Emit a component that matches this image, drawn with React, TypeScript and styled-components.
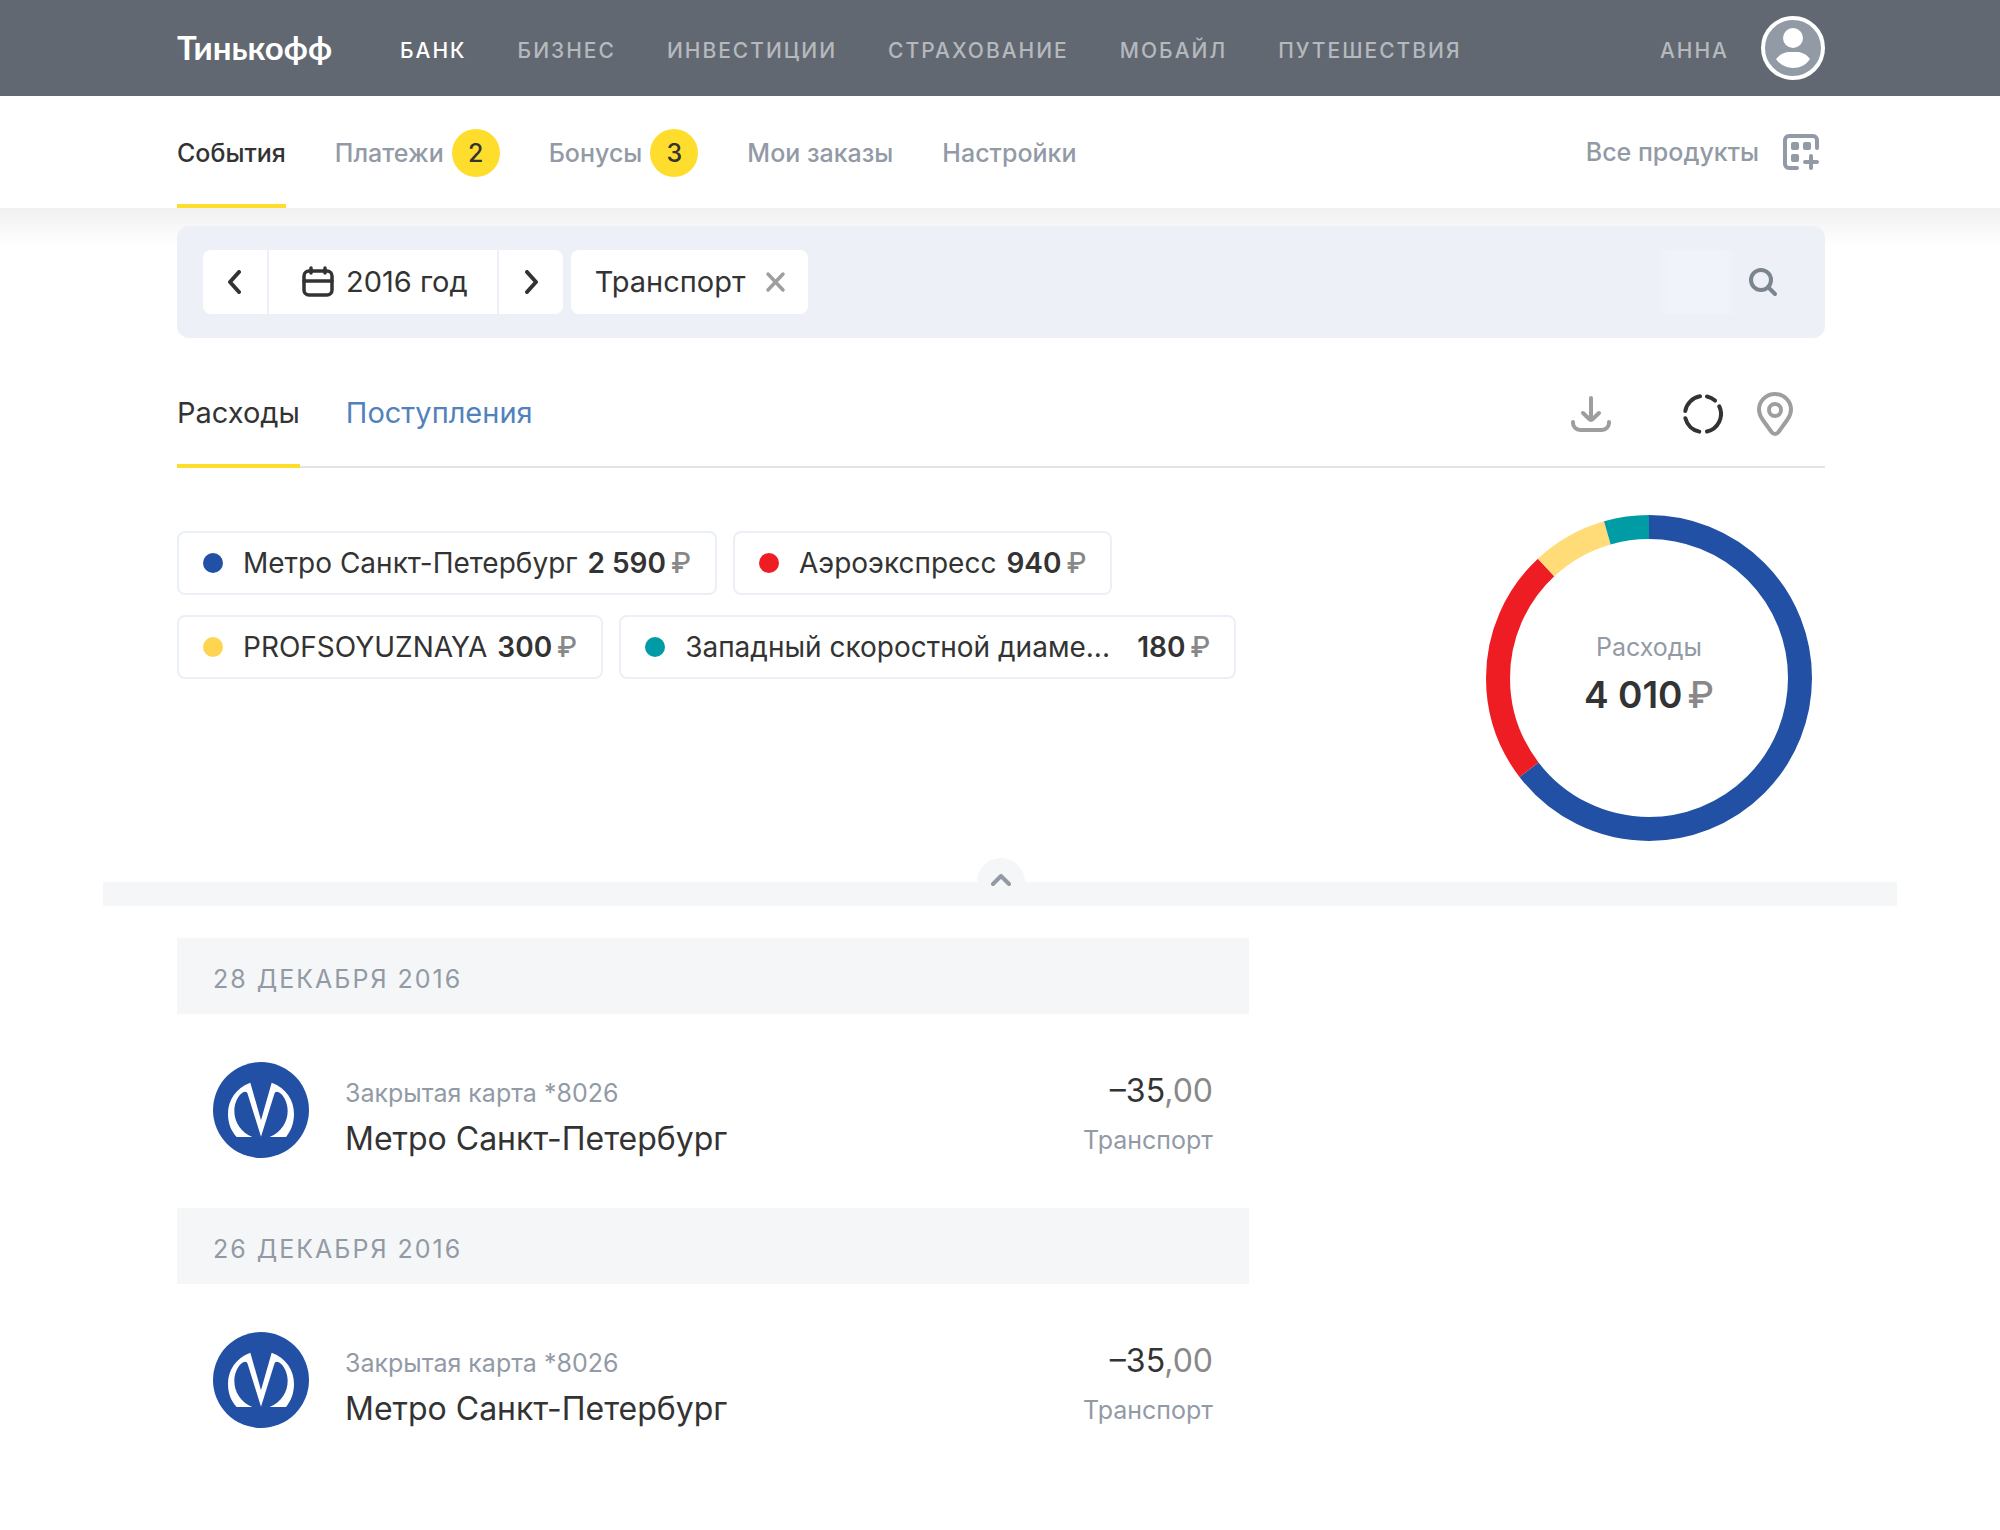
import React from "react";
import styled, { createGlobalStyle } from "styled-components";

const colors = {
  header: "#626871",
  headerMuted: "#b5b9be",
  text: "#333333",
  muted: "#929aa6",
  grey: "#888888",
  icon: "#9e9e9e",
  accent: "#ffdd2d",
  link: "#5182bc",
  panel: "#edf0f6",
  soft: "#f5f6f8",
};

const GlobalStyle = createGlobalStyle`
  *, *::before, *::after { box-sizing: border-box; }
  body {
    margin: 0;
    background: #fff;
    color: ${colors.text};
    font-family: Inter, "Liberation Sans", Arial, sans-serif;
    -webkit-font-smoothing: antialiased;
  }
  button, input { font: inherit; color: inherit; }
  button { border: 0; padding: 0; background: none; cursor: pointer; }
  a { color: inherit; text-decoration: none; }
  svg { display: block; flex: none; }
`;

const Container = styled.div`
  padding: 0 175px 0 177px;
`;

/* Top bar */

const TopBar = styled.header`
  background: ${colors.header};
`;

const TopBarInner = styled(Container)`
  display: flex;
  align-items: center;
  height: 96px;
`;

const Logo = styled.a`
  padding-bottom: 2px;
  color: #fff;
  font-family: Lato, "Liberation Sans", sans-serif;
  font-size: 33px;
  line-height: 40px;
  font-weight: 700;
`;

const TopNav = styled.nav`
  display: flex;
  gap: 51px;
  margin-left: 68px;
  padding-top: 6px;
`;

const TopLink = styled.a<{ $active?: boolean }>`
  color: ${(p) => (p.$active ? "#fff" : colors.headerMuted)};
  font-size: 21px;
  line-height: 28px;
  font-weight: 500;
  letter-spacing: 2px;
  text-transform: uppercase;
`;

const Profile = styled.a`
  display: flex;
  align-items: center;
  gap: 32px;
  margin-left: auto;
`;

const ProfileName = styled(TopLink).attrs({ as: "span" })`
  padding-top: 6px;
`;

/* Section navigation */

const SubBar = styled.div`
  background: #fff;
`;

const SubBarInner = styled(Container)`
  display: flex;
  align-items: stretch;
  height: 112px;
`;

const SubNav = styled.nav`
  display: flex;
  gap: 49px;
`;

const SubLink = styled.a<{ $active?: boolean }>`
  display: flex;
  align-items: center;
  gap: 8px;
  padding-top: 5px;
  border-bottom: 4px solid ${(p) => (p.$active ? colors.accent : "transparent")};
  color: ${(p) => (p.$active ? colors.text : colors.muted)};
  font-size: 25px;
  line-height: 32px;
  font-weight: 500;
`;

const Badge = styled.span`
  display: grid;
  place-items: center;
  width: 48px;
  height: 48px;
  border-radius: 50%;
  background: ${colors.accent};
  color: ${colors.text};
`;

const ProductsLink = styled.a`
  display: flex;
  align-items: center;
  gap: 24px;
  margin-left: auto;
  padding-right: 6px;
  color: ${colors.muted};
  font-size: 25px;
  line-height: 32px;
  font-weight: 500;
`;

/* Filter panel */

const Main = styled.main`
  padding-top: 18px;
  background: linear-gradient(#f0f0f0, #fff) top / 100% 38px no-repeat;
`;

const FilterPanel = styled.section`
  display: flex;
  gap: 8px;
  height: 112px;
  padding: 24px 26px;
  border-radius: 12px;
  background: ${colors.panel};
  font-size: 29px;
  line-height: 36px;
`;

const Period = styled.div`
  display: flex;
  gap: 2px;
  border-radius: 8px;
  overflow: hidden;
`;

const PeriodStep = styled.button`
  display: grid;
  place-items: center;
  width: 64px;
  background: #fff;
`;

const PeriodValue = styled.button`
  display: flex;
  align-items: center;
  gap: 12px;
  padding: 0 29px 0 33px;
  background: #fff;
`;

const FilterTag = styled.button`
  display: flex;
  align-items: center;
  gap: 18px;
  padding: 0 20px 0 24px;
  border-radius: 8px;
  background: #fff;
`;

const Search = styled.form`
  display: flex;
  align-items: center;
  flex: 1;
  gap: 6px;
  padding-right: 16px;
`;

const SearchInput = styled.input`
  flex: 1;
  min-width: 0;
  height: 64px;
  border: 0;
  outline: 0;
  background: linear-gradient(90deg, ${colors.panel}, #f0f3f9 15%, #f0f3f9 85%, ${colors.panel})
    right / 80px 100% no-repeat;
`;

const SearchButton = styled.button`
  display: grid;
  place-items: center;
  width: 40px;
  height: 64px;
  color: #7a858e;
`;

/* Tabs */

const TabsRow = styled.div`
  display: flex;
  align-items: stretch;
  justify-content: space-between;
  height: 108px;
  margin-top: 22px;
  box-shadow: inset 0 -2px 0 #e4e4e4;
`;

const Tabs = styled.div`
  display: flex;
  gap: 46px;
`;

const Tab = styled.button<{ $active?: boolean }>`
  padding-top: 2px;
  border-bottom: 4px solid ${(p) => (p.$active ? colors.accent : "transparent")};
  color: ${(p) => (p.$active ? colors.text : colors.link)};
  font-size: 29px;
  line-height: 36px;
`;

const Tools = styled.div`
  display: flex;
  align-items: center;
  gap: 34px;
  padding-right: 32px;
`;

const Tool = styled.button<{ $active?: boolean; $apart?: boolean }>`
  margin-right: ${(p) => (p.$apart ? "38px" : "0")};
  color: ${(p) => (p.$active ? colors.text : colors.icon)};
`;

/* Statistics */

const Stats = styled.section`
  display: flex;
  justify-content: space-between;
  gap: 40px;
  padding: 46px 12px 40px 0;
`;

const Chips = styled.ul`
  display: flex;
  flex-wrap: wrap;
  align-content: flex-start;
  gap: 20px 16px;
  flex: 1;
  max-width: 1080px;
  margin: 0;
  padding: 17px 0 0;
  list-style: none;
`;

const Chip = styled.button`
  display: flex;
  align-items: center;
  height: 64px;
  padding: 0 24px;
  border: 2px solid #ebf0f7;
  border-radius: 8px;
  font-size: 28px;
  line-height: 36px;
`;

const Dot = styled.span<{ $color: string }>`
  width: 20px;
  height: 20px;
  margin-right: 20px;
  border-radius: 50%;
  background: ${(p) => p.$color};
`;

const ChipLabel = styled.span<{ $clipped?: boolean }>`
  min-width: ${(p) => (p.$clipped ? "442px" : "0")};
  margin-right: 10px;
  text-align: left;
`;

const Sum = styled.span`
  display: flex;
  gap: 5px;
  font-weight: 600;
`;

const Ruble = styled.span`
  color: ${colors.grey};
  font-weight: 500;
`;

const Donut = styled.figure`
  display: grid;
  flex: none;
  width: 328px;
  height: 328px;
  margin: 0;
`;

const DonutChart = styled.svg`
  grid-area: 1 / 1;
`;

const DonutCaption = styled.figcaption`
  grid-area: 1 / 1;
  display: flex;
  flex-direction: column;
  align-items: center;
  justify-content: center;
  gap: 8px;
  padding-bottom: 6px;
`;

const DonutTitle = styled.span`
  color: ${colors.muted};
  font-size: 25px;
  line-height: 32px;
`;

const DonutTotal = styled(Sum)`
  font-size: 37px;
  line-height: 48px;
`;

/* Divider with the collapse handle */

const Divider = styled.div`
  position: relative;
  height: 24px;
  margin: 0 103px;
  background: ${colors.soft};
`;

const Collapse = styled.button`
  position: absolute;
  bottom: 0;
  left: 50%;
  display: grid;
  justify-items: center;
  align-content: start;
  width: 48px;
  height: 48px;
  margin-left: -23px;
  padding-top: 16px;
  border-radius: 50%;
  background: ${colors.soft};
  color: ${colors.muted};
`;

/* Operations */

const Operations = styled.section`
  max-width: 1072px;
  margin-top: 32px;
`;

const DayTitle = styled.h2`
  margin: 0;
  padding: 25px 36px 19px;
  background: ${colors.soft};
  color: ${colors.muted};
  font-size: 25px;
  line-height: 32px;
  font-weight: 400;
  letter-spacing: 2px;
  text-transform: uppercase;
`;

const Operation = styled.article`
  display: flex;
  gap: 36px;
  padding: 48px 36px 50px;
`;

const OperationInfo = styled.div`
  display: flex;
  flex: 1;
  flex-direction: column;
  justify-content: flex-start;
  gap: 11px;
  padding-top: 16px;
`;

const OperationSum = styled.div`
  display: flex;
  flex-direction: column;
  align-items: flex-end;
  gap: 15px;
  padding-top: 9px;
`;

const Caption = styled.span`
  color: ${colors.muted};
  font-size: 25px;
  line-height: 30px;
`;

const Title = styled.span`
  margin-bottom: -1px;
  font-size: 32px;
  line-height: 40px;
`;

const Cents = styled.span`
  color: ${colors.grey};
`;

/* Icons */

const line = {
  fill: "none",
  stroke: "currentColor",
  strokeWidth: 4,
  strokeLinecap: "round" as const,
  strokeLinejoin: "round" as const,
};

const AvatarIcon = () => (
  <svg width="64" height="64" viewBox="0 0 64 64">
    <circle cx="32" cy="32" r="30" fill="#929aa6" stroke="#fff" strokeWidth="4" />
    <circle cx="32" cy="22" r="10" fill="#fff" />
    <path fill="#fff" d="M15 43C19 38 24 36 28 36H36C41 36 45 38 49 43C45 49 39 52 32 52S19 49 15 43Z" />
  </svg>
);

const ProductsIcon = () => (
  <svg width="36" height="36" viewBox="0 0 36 36">
    <path {...line} d="M34 14V6a4 4 0 0 0-4-4H6a4 4 0 0 0-4 4v24a4 4 0 0 0 4 4h8M28 22v12M22 28h12" />
    <g fill="currentColor">
      <rect x="8" y="8" width="8" height="8" rx="2" />
      <rect x="20" y="8" width="8" height="8" rx="2" />
      <rect x="8" y="20" width="8" height="8" rx="2" />
    </g>
  </svg>
);

const PrevIcon = () => (
  <svg width="24" height="24" viewBox="0 0 24 24">
    <path {...line} d="M16 2L7 12l9 10" />
  </svg>
);

const NextIcon = () => (
  <svg width="24" height="24" viewBox="0 0 24 24">
    <path {...line} d="M8 2l9 10L8 22" />
  </svg>
);

const CalendarIcon = () => (
  <svg width="32" height="32" viewBox="0 0 32 32">
    <rect {...line} strokeWidth={3.5} x="2" y="5" width="28" height="24" rx="5" />
    <path {...line} strokeWidth={3.5} d="M2 15h28M9 2v5M23 2v5" />
  </svg>
);

const CrossIcon = () => (
  <svg width="24" height="24" viewBox="0 0 24 24">
    <path {...line} strokeWidth={3.5} stroke={colors.icon} d="M4 4l15 16M19 4L4 20" />
  </svg>
);

const SearchIcon = () => (
  <svg width="32" height="32" viewBox="0 0 32 32">
    <circle {...line} cx="14" cy="14" r="10" />
    <path {...line} d="M21 21l7 7" />
  </svg>
);

const DownloadIcon = () => (
  <svg width="40" height="36" viewBox="0 0 40 36">
    <path {...line} d="M20 2v21M12 17l6.5 6.3a2 2 0 0 0 3 0L28 17M2 26v1a7 7 0 0 0 7 7h22a7 7 0 0 0 7-7v-1" />
  </svg>
);

const ChartIcon = () => (
  <svg width="40" height="40" viewBox="0 0 40 40">
    <path
      {...line}
      d="M17 2.3A18 18 0 0 0 2.3 17M2.4 24.3A18 18 0 0 0 16.3 37.6M24 37.5A18 18 0 0 0 36.3 12.4M32 6.6A18 18 0 0 0 24 2.5"
    />
  </svg>
);

const PinIcon = () => (
  <svg width="36" height="44" viewBox="0 0 36 44">
    <path
      {...line}
      d="M18 2C9 2 2 9 2 17.500C2 21.500 3.500 24.500 5.500 27.500L14.500 40C16.500 42.600 19.500 42.600 21.500 40L30.500 27.500C32.500 24.500 34 21.500 34 17.500C34 9 27 2 18 2Z"
    />
    <circle {...line} cx="18" cy="18" r="6" />
  </svg>
);

const UpIcon = () => (
  <svg width="20" height="12" viewBox="0 0 20 12">
    <path {...line} d="M2 10l8-8 8 8" />
  </svg>
);

const MetroIcon = () => (
  <svg width="96" height="96" viewBox="0 0 288 288">
    <circle cx="144" cy="144" r="144" fill="#2250a4" />
    <path
      fill="#fff"
      d="M112 62L144 175L176 62C220 78 243 115 243 155C243 185 233 207 219 225H170C205 210 224 180 224 146C224 122 212 100 200 92C192 87 186 88 184 96L144 224L104 96C102 88 96 87 88 92C76 100 64 122 64 146C64 180 83 210 118 225H71C55 207 45 185 45 155C45 115 68 78 112 62Z"
    />
  </svg>
);

/* Data */

const topLinks = ["Банк", "Бизнес", "Инвестиции", "Страхование", "Мобайл", "Путешествия"];

const subLinks = [
  { label: "События" },
  { label: "Платежи", badge: 2 },
  { label: "Бонусы", badge: 3 },
  { label: "Мои заказы" },
  { label: "Настройки" },
];

const expenses = [
  { label: "Метро Санкт-Петербург", sum: 2590, color: "#2250a4", arc: "#2250a4" },
  { label: "Аэроэкспресс", sum: 940, color: "#ee1d23", arc: "#ee1d23" },
  { label: "PROFSOYUZNAYA", sum: 300, color: "#ffd450", arc: "#ffdc78" },
  { label: "Западный скоростной диаме...", sum: 180, color: "#009ca6", arc: "#009ca6", clipped: true },
];

const days = ["28 декабря 2016", "26 декабря 2016"];

const total = expenses.reduce((acc, item) => acc + item.sum, 0);
const format = (value: number) => String(value).replace(/\B(?=(\d{3})+$)/g, "\u00a0");

const ExpensesChart = () => {
  const radius = 151;
  const length = 2 * Math.PI * radius;
  let passed = 0;
  return (
    <DonutChart viewBox="0 0 328 328" role="img" aria-label="Структура расходов">
      {expenses.map((item) => {
        const part = (item.sum / total) * length;
        const offset = -passed;
        passed += part;
        return (
          <circle
            key={item.label}
            cx="164"
            cy="164"
            r={radius}
            fill="none"
            stroke={item.arc}
            strokeWidth="24"
            strokeDasharray={`${part} ${length - part}`}
            strokeDashoffset={offset}
            transform="rotate(-90 164 164)"
          />
        );
      })}
    </DonutChart>
  );
};

export default function App() {
  return (
    <>
      <GlobalStyle />
      <TopBar>
        <TopBarInner>
          <Logo href="#">Тинькофф</Logo>
          <TopNav>
            {topLinks.map((label, i) => (
              <TopLink key={label} href="#" $active={i === 0}>
                {label}
              </TopLink>
            ))}
          </TopNav>
          <Profile href="#">
            <ProfileName>Анна</ProfileName>
            <AvatarIcon />
          </Profile>
        </TopBarInner>
      </TopBar>

      <SubBar>
        <SubBarInner>
          <SubNav>
            {subLinks.map((item, i) => (
              <SubLink key={item.label} href="#" $active={i === 0}>
                {item.label}
                {item.badge && <Badge>{item.badge}</Badge>}
              </SubLink>
            ))}
          </SubNav>
          <ProductsLink href="#">
            Все продукты
            <ProductsIcon />
          </ProductsLink>
        </SubBarInner>
      </SubBar>

      <Main>
        <Container>
          <FilterPanel>
            <Period>
              <PeriodStep aria-label="Предыдущий год">
                <PrevIcon />
              </PeriodStep>
              <PeriodValue>
                <CalendarIcon />
                2016 год
              </PeriodValue>
              <PeriodStep aria-label="Следующий год">
                <NextIcon />
              </PeriodStep>
            </Period>
            <FilterTag>
              Транспорт
              <CrossIcon />
            </FilterTag>
            <Search onSubmit={(e) => e.preventDefault()}>
              <SearchInput type="text" aria-label="Поиск по операциям" />
              <SearchButton aria-label="Найти">
                <SearchIcon />
              </SearchButton>
            </Search>
          </FilterPanel>

          <TabsRow>
            <Tabs>
              <Tab $active>Расходы</Tab>
              <Tab>Поступления</Tab>
            </Tabs>
            <Tools>
              <Tool $apart aria-label="Скачать">
                <DownloadIcon />
              </Tool>
              <Tool $active aria-label="Диаграмма">
                <ChartIcon />
              </Tool>
              <Tool aria-label="На карте">
                <PinIcon />
              </Tool>
            </Tools>
          </TabsRow>

          <Stats>
            <Chips>
              {expenses.map((item) => (
                <li key={item.label}>
                  <Chip>
                    <Dot $color={item.color} />
                    <ChipLabel $clipped={item.clipped}>{item.label}</ChipLabel>
                    <Sum>
                      {format(item.sum)}
                      <Ruble>₽</Ruble>
                    </Sum>
                  </Chip>
                </li>
              ))}
            </Chips>
            <Donut>
              <ExpensesChart />
              <DonutCaption>
                <DonutTitle>Расходы</DonutTitle>
                <DonutTotal>
                  {format(total)}
                  <Ruble>₽</Ruble>
                </DonutTotal>
              </DonutCaption>
            </Donut>
          </Stats>
        </Container>

        <Divider>
          <Collapse aria-label="Свернуть">
            <UpIcon />
          </Collapse>
        </Divider>

        <Container>
          <Operations>
            {days.map((day) => (
              <React.Fragment key={day}>
                <DayTitle>{day}</DayTitle>
                <Operation>
                  <MetroIcon />
                  <OperationInfo>
                    <Caption>Закрытая карта *8026</Caption>
                    <Title>Метро Санкт-Петербург</Title>
                  </OperationInfo>
                  <OperationSum>
                    <Title>
                      –35<Cents>,00</Cents>
                    </Title>
                    <Caption>Транспорт</Caption>
                  </OperationSum>
                </Operation>
              </React.Fragment>
            ))}
          </Operations>
        </Container>
      </Main>
    </>
  );
}
